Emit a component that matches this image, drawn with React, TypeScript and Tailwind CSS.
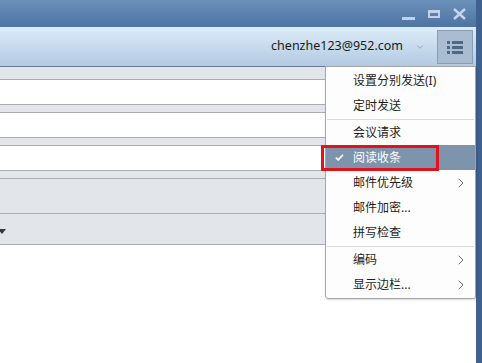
import { ChevronDown, ChevronRight } from "lucide-react";

type MenuItem = { label: string; submenu?: boolean; checked?: boolean; separatorBefore?: boolean };

const menuItems: MenuItem[] = [
  { label: "设置分别发送(I)" },
  { label: "定时发送" },
  { label: "会议请求", separatorBefore: true },
  { label: "阅读收条", checked: true },
  { label: "邮件优先级", submenu: true },
  { label: "邮件加密..." },
  { label: "拼写检查" },
  { label: "编码", submenu: true, separatorBefore: true },
  { label: "显示边栏...", submenu: true },
];

const fontStack = "font-['Noto_Sans','Noto_Sans_CJK_SC',sans-serif]";

function InputRow() {
  return <div className="h-[26px] border-y border-[#a8acb1] bg-white" />;
}

function ListIcon() {
  return (
    <svg width="18" height="14" viewBox="0 0 18 14" aria-hidden="true">
      {[1, 6, 11].map((y) => (
        <g key={y} fill="#4f6985">
          <rect x="1" y={y} width="3" height="3" />
          <rect x="6" y={y} width="11" height="3" />
        </g>
      ))}
    </svg>
  );
}

export default function App() {
  return (
    <div className={`relative flex h-[363px] w-[482px] overflow-hidden bg-white ${fontStack}`}>
      <div className="flex w-[476px] flex-col">
        {/* title bar */}
        <div className="flex h-[27px] items-center justify-end gap-[13px] bg-gradient-to-b from-[#6b90ba] to-[#4d74a2] pr-[10px]">
          <div className="mt-[9px] h-[3px] w-[13px] bg-[#bfd2e8]" />
          <div className="h-[8px] w-[12px] border-2 border-t-[3px] border-[#bfd2e8]" />
          <svg width="13" height="12" viewBox="0 0 13 12" aria-hidden="true">
            <path d="M1 1 L12 11 M12 1 L1 11" stroke="#c3d5ea" strokeWidth="2.4" />
          </svg>
        </div>

        {/* toolbar */}
        <div className="flex h-[40px] items-center justify-end border-b border-[#667a91] bg-gradient-to-b from-[#dcecf9] to-[#b4cae2] pr-[3px]">
          <span className="text-[12.5px] text-[#1b1b1b]">chenzhe123@952.com</span>
          <ChevronDown className="ml-[12px] mr-[12px] size-[10px] text-[#8a98a8]" strokeWidth={2} />
          <div className="flex h-[34px] w-[36px] items-center justify-center border border-[#8b9db2] bg-[#a9bcd1]">
            <ListIcon />
          </div>
        </div>

        {/* body */}
        <div className="flex flex-1">
          <div className="flex w-[326px] flex-col">
            <div className="flex flex-col border-r border-[#b3b7bc] bg-[#e2e6eb]">
              <div className="h-[12px]" />
              <InputRow />
              <div className="h-[7px]" />
              <InputRow />
              <div className="h-[7px]" />
              <InputRow />
              <div className="h-[7px]" />
              <div className="h-[35px] border-t border-[#a8acb1]" />
              <div className="relative h-[32px] border-y border-[#a8acb1]">
                <svg className="absolute left-[-2px] top-[15px]" width="8" height="5" viewBox="0 0 8 5" aria-hidden="true">
                  <path d="M0 0 H8 L4 5 Z" fill="#3a3a3a" />
                </svg>
              </div>
            </div>
            <div className="flex-1 bg-white" />
          </div>
          <div className="flex-1 bg-white" />
        </div>
      </div>

      {/* window frame */}
      <div className="w-[6px] bg-[#3e6190]" />

      {/* dropdown menu */}
      <div className="absolute left-[325px] top-[66px] flex w-[151px] flex-col rounded-b-[3px] border border-[#a5a5a5] bg-[#fdfdfd] pb-[1px] pt-[1px] shadow-[1px_1px_2px_rgba(0,0,0,0.15)]">
        {menuItems.map((item) => (
          <div key={item.label} className="flex flex-col">
            {item.separatorBefore && <div className="mx-[1px] my-[0.5px] h-px bg-[#dcdcdc]" />}
            <div
              className={`relative flex h-[25px] items-center pl-[27px] pr-[6px] text-[12px] ${
                item.checked ? "bg-[#7e94ac] text-white" : "text-[#1e1e1e]"
              }`}
            >
              {item.checked && (
                <svg className="absolute left-[9px] top-[9px]" width="9" height="7" viewBox="0 0 9 7" aria-hidden="true">
                  <path d="M0.8 3.6 L3.2 5.9 L8 0.8" fill="none" stroke="white" strokeWidth="1.6" />
                </svg>
              )}
              <span className="flex-1">{item.label}</span>
              {item.submenu && <ChevronRight className="size-[16px] text-[#555]" strokeWidth={1.3} />}
            </div>
          </div>
        ))}
      </div>

      {/* highlight annotation */}
      <div className="absolute left-[321px] top-[145px] h-[26px] w-[118px] border-[3px] border-[#e0131c]" />
    </div>
  );
}
